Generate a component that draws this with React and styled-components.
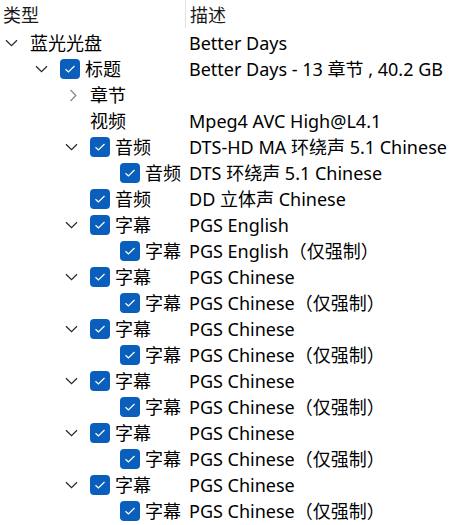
import React from "react";
import styled, { createGlobalStyle } from "styled-components";

const GlobalStyle = createGlobalStyle`
  html, body {
    margin: 0;
    padding: 0;
    background: #ffffff;
  }
  body {
    font-family: "Noto Sans", "Noto Sans CJK SC", sans-serif;
    font-size: 18px;
    color: #000000;
  }
`;

const Tree = styled.div`
  width: 473px;
  height: 525px;
  overflow: hidden;
  background: #ffffff;
`;

const Header = styled.div`
  display: grid;
  grid-template-columns: 185px 1fr;
  height: 30px;
`;

const HeaderCell = styled.div`
  display: flex;
  align-items: center;
  padding-left: ${(p) => (p.$first ? "3px" : "4px")};
  height: 28px;
  color: #1a1a1a;
  border-left: ${(p) => (p.$first ? "none" : "1px solid #e3e3e3")};
  white-space: nowrap;
`;

const Row = styled.div`
  display: grid;
  grid-template-columns: 185px 1fr;
  height: 26px;
  align-items: center;
  line-height: 26px;
  white-space: nowrap;
`;

const TypeCell = styled.div`
  display: flex;
  align-items: center;
  padding-left: ${(p) => p.$level * 30}px;
  height: 26px;
  overflow: visible;
`;

const Expander = styled.span`
  flex: none;
  width: 30px;
  height: 26px;
  display: flex;
  align-items: center;
  padding-left: 5px;
  box-sizing: border-box;
`;

const CheckBox = styled.span`
  flex: none;
  width: 20px;
  height: 20px;
  border-radius: 4px;
  background: #0a5fbd;
  margin-right: 5px;
  display: flex;
  align-items: center;
  justify-content: center;
`;

const Label = styled.span`
  flex: none;
`;

const DescCell = styled.div`
  padding-left: 4px;
`;

function Chevron({ open }) {
  if (open) {
    return (
      <svg width="13" height="8" viewBox="0 0 13 8">
        <path d="M1 1.2 L6.5 6.6 L12 1.2" fill="none" stroke="#2b2b2b" strokeWidth="1.3" />
      </svg>
    );
  }
  return (
    <svg width="13" height="13" viewBox="0 0 13 13" style={{ marginLeft: 3 }}>
      <path d="M2.5 1 L7.8 6.5 L2.5 12" fill="none" stroke="#8a8a8a" strokeWidth="1.3" />
    </svg>
  );
}

function Check() {
  return (
    <CheckBox>
      <svg width="12" height="10" viewBox="0 0 12 10">
        <path d="M1.5 5.3 L4.4 8 L10.5 2" fill="none" stroke="#ffffff" strokeWidth="1.2" />
      </svg>
    </CheckBox>
  );
}

const rows = [
  { level: 0, exp: "open", label: "蓝光光盘", desc: "Better Days" },
  { level: 1, exp: "open", check: true, label: "标题", desc: "Better Days - 13 章节 , 40.2 GB" },
  { level: 2, exp: "closed", label: "章节", desc: "" },
  { level: 2, label: "视频", desc: "Mpeg4 AVC High@L4.1" },
  { level: 2, exp: "open", check: true, label: "音频", desc: "DTS-HD MA 环绕声 5.1 Chinese" },
  { level: 3, check: true, label: "音频", desc: "DTS 环绕声 5.1 Chinese" },
  { level: 2, check: true, label: "音频", desc: "DD 立体声 Chinese" },
  { level: 2, exp: "open", check: true, label: "字幕", desc: "PGS English" },
  { level: 3, check: true, label: "字幕", desc: "PGS English（仅强制）" },
];

for (let i = 0; i < 5; i++) {
  rows.push({ level: 2, exp: "open", check: true, label: "字幕", desc: "PGS Chinese" });
  rows.push({ level: 3, check: true, label: "字幕", desc: "PGS Chinese（仅强制）" });
}

export default function App() {
  return (
    <>
      <GlobalStyle />
      <Tree>
        <Header>
          <HeaderCell $first>类型</HeaderCell>
          <HeaderCell>描述</HeaderCell>
        </Header>
        {rows.map((r, i) => (
          <Row key={i}>
            <TypeCell $level={r.level}>
              <Expander>{r.exp && <Chevron open={r.exp === "open"} />}</Expander>
              {r.check && <Check />}
              <Label>{r.label}</Label>
            </TypeCell>
            <DescCell>{r.desc}</DescCell>
          </Row>
        ))}
      </Tree>
    </>
  );
}
